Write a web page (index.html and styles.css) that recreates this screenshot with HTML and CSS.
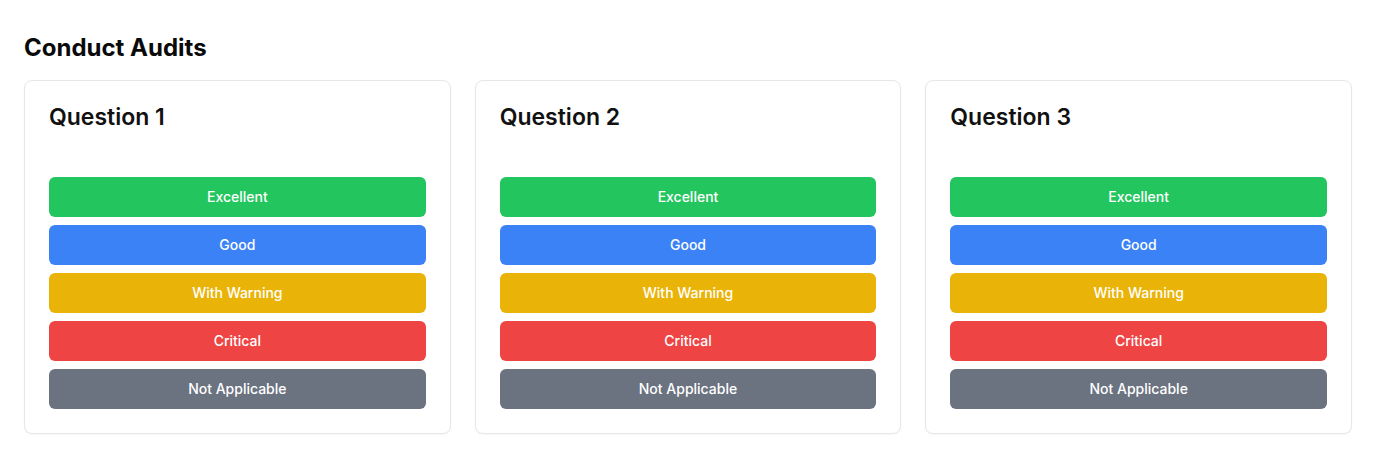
FILE: index.html
```html
<!DOCTYPE html>
<html lang="en">
<head>
<meta charset="utf-8">
<title>Conduct Audits</title>
<link rel="stylesheet" href="styles.css">
</head>
<body>
<main class="page">
  <h1 class="page-title">Conduct Audits</h1>
  <div class="cards">
    <section class="card">
      <h2 class="card-title">Question 1</h2>
      <div class="options">
        <button class="opt opt-excellent">Excellent</button>
        <button class="opt opt-good">Good</button>
        <button class="opt opt-warning">With Warning</button>
        <button class="opt opt-critical">Critical</button>
        <button class="opt opt-na">Not Applicable</button>
      </div>
    </section>
    <section class="card">
      <h2 class="card-title">Question 2</h2>
      <div class="options">
        <button class="opt opt-excellent">Excellent</button>
        <button class="opt opt-good">Good</button>
        <button class="opt opt-warning">With Warning</button>
        <button class="opt opt-critical">Critical</button>
        <button class="opt opt-na">Not Applicable</button>
      </div>
    </section>
    <section class="card">
      <h2 class="card-title">Question 3</h2>
      <div class="options">
        <button class="opt opt-excellent">Excellent</button>
        <button class="opt opt-good">Good</button>
        <button class="opt opt-warning">With Warning</button>
        <button class="opt opt-critical">Critical</button>
        <button class="opt opt-na">Not Applicable</button>
      </div>
    </section>
  </div>
</main>
</body>
</html>
```
FILE: styles.css
```css
* { box-sizing: border-box; }
html, body { margin: 0; padding: 0; background: #ffffff; }
body {
  font-family: Inter, "Noto Sans", "Liberation Sans", sans-serif;
  color: #111111;
}
.page {
  padding: 32px 24px;
}
.page-title {
  margin: 0 0 16px;
  font-size: 24px;
  line-height: 32px;
  font-weight: 700;
  color: #0a0a0a;
}
.cards {
  display: grid;
  grid-template-columns: repeat(3, 1fr);
  gap: 24px;
}
.card {
  border: 1px solid #e5e7eb;
  border-radius: 8px;
  padding: 24px;
  background: #fff;
  box-shadow: 0 1px 2px rgba(0,0,0,0.04);
}
.card-title {
  margin: 0 0 48px;
  font-size: 23px;
  line-height: 24px;
  font-weight: 600;
  color: #111111;
}
.options {
  display: flex;
  flex-direction: column;
  gap: 8px;
}
.opt {
  display: block;
  width: 100%;
  height: 40px;
  border: none;
  border-radius: 6px;
  color: #ffffff;
  font-family: Inter, "Noto Sans", "Liberation Sans", sans-serif;
  font-size: 14px;
  font-weight: 500;
  padding: 0 16px 2px;
  cursor: pointer;
}
.opt-excellent { background: #22c55e; }
.opt-good { background: #3b82f6; }
.opt-warning { background: #eab308; }
.opt-critical { background: #ef4444; }
.opt-na { background: #6b7280; }
```
